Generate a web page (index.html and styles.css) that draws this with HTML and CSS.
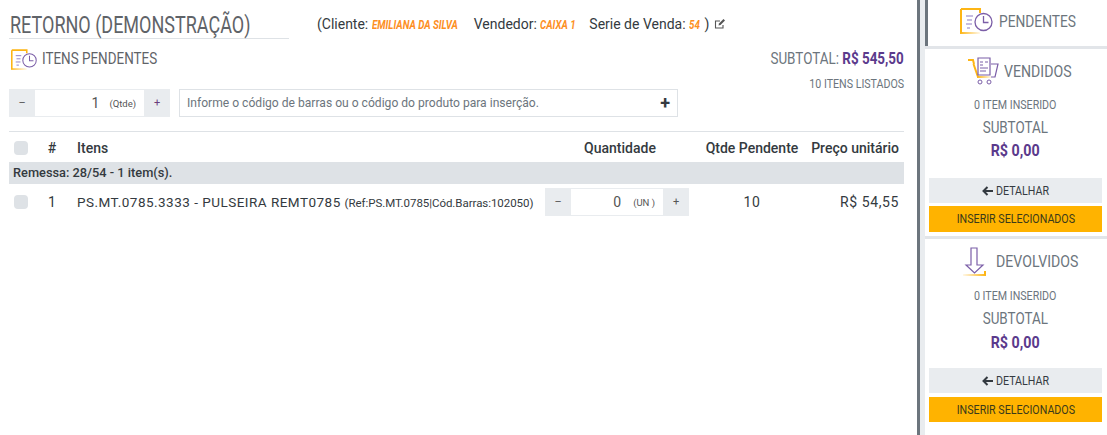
FILE: index.html
```html
<!DOCTYPE html>
<html lang="pt-BR">
<head>
<meta charset="utf-8">
<title>Retorno</title>
<link rel="stylesheet" href="styles.css">
</head>
<body>
<div class="app">
  <main class="main">
    <header class="top">
      <h1 class="title"><span class="cond">RETORNO (DEMONSTRAÇÃO)</span></h1>
      <p class="info">(Cliente: <em class="e1">EMILIANA DA SILVA</em><span class="sp"></span>Vendedor: <em class="e2">CAIXA 1</em><span class="sp"></span>Serie de Venda: <em class="e3">54</em> )
        <svg class="edit" width="12" height="12" viewBox="0 0 12 12"><path d="M9 7v3H1.500V3H6" fill="none" stroke="#555" stroke-width="1.100"/><path d="M4.500 7.500 5 5.500 9.500 1l1.500 1.500L6.500 7z" fill="#555"/></svg>
      </p>
    </header>
    <section class="summary">
      <div class="sec-title">
        <svg class="ico-pend" width="26" height="22" viewBox="0 0 33 27"><defs><linearGradient id="fade" x1="0" y1="0" x2="1" y2="0"><stop offset="0" stop-color="#fdb515"/><stop offset="1" stop-color="#fdb515" stop-opacity=".1"/></linearGradient></defs><path d="M1 1h19v4M1 1v24" fill="none" stroke="#fdb515" stroke-width="2"/><path d="M0 24h20v2H0z" fill="url(#fade)"/><path d="M6 8h7M7 12h5M6 16h6M7 20h3" stroke="#8e7cc3" stroke-width="1.200"/><circle cx="23.500" cy="14" r="8.500" fill="#fff" stroke="#7b5ea7" stroke-width="1.300"/><path d="M23.500 8v6.500h5" fill="none" stroke="#7b5ea7" stroke-width="1.300"/></svg>
        <span class="cond w-pend">ITENS PENDENTES</span>
      </div>
      <div class="totals">
        <div class="subtotal"><span class="cond right">SUBTOTAL: <b>R$ 545,50</b></span></div>
        <div class="listed"><span class="cond right">10 ITENS LISTADOS</span></div>
      </div>
    </section>
    <section class="inserts">
      <div class="stepper big">
        <span class="step">–</span>
        <span class="field"><span class="num">1</span><small>(Qtde)</small></span>
        <span class="step plus">+</span>
      </div>
      <div class="search">
        <span>Informe o código de barras ou o código do produto para inserção.</span>
        <b class="add">+</b>
      </div>
    </section>
    <section class="table">
      <div class="row head">
        <span class="check"></span>
        <span class="c-num">#</span>
        <span>Itens</span>
        <span class="c-center">Quantidade</span>
        <span class="c-center">Qtde Pendente</span>
        <span class="c-right">Preço unitário</span>
      </div>
      <div class="group">Remessa: 28/54 - 1 item(s).</div>
      <div class="row item">
        <span class="check"></span>
        <span class="c-num">1</span>
        <span class="name">PS.MT.0785.3333 - PULSEIRA REMT0785 <small>(Ref:PS.MT.0785|Cód.Barras:102050)</small></span>
        <div class="stepper">
          <span class="step">–</span>
          <span class="field"><span class="num">0</span><small>(UN )</small></span>
          <span class="step">+</span>
        </div>
        <span class="c-center wide">10</span>
        <span class="c-right wide">R$ 54,55</span>
      </div>
    </section>
  </main>
  <aside class="side">
    <div class="tab">
      <svg width="33" height="27" viewBox="0 0 33 27"><path d="M1 1h19v4M1 1v24" fill="none" stroke="#fdb515" stroke-width="2"/><path d="M0 24h20v2H0z" fill="url(#fade)"/><path d="M6 8h7M7 12h5M6 16h6M7 20h3" stroke="#8e7cc3" stroke-width="1.200"/><circle cx="23.500" cy="14" r="8.500" fill="#fff" stroke="#7b5ea7" stroke-width="1.300"/><path d="M23.500 8v6.500h5" fill="none" stroke="#7b5ea7" stroke-width="1.300"/></svg>
      <span class="cond w-tab">PENDENTES</span>
    </div>
    <div class="card">
      <div class="card-title vend">
        <svg width="33" height="28" viewBox="0 0 33 28"><path d="M1 3h5l1 4" fill="none" stroke="#fdb515" stroke-width="2"/><path d="M6.500 7 11 20" stroke="#fdb515" stroke-width="2"/><path d="M10 19h14v2H10z" fill="url(#fade)"/><path d="M11 1h12v17H11z" fill="#fff" stroke="#7b5ea7" stroke-width="1.200"/><path d="M13 5h3M18 5h3M13 8h3M13 11h8M13 14h6" stroke="#7b5ea7"/><path d="M24 7h7l-3 13h-4" fill="none" stroke="#7b5ea7" stroke-width="1.200"/><circle cx="13" cy="25" r="2" fill="none" stroke="#7b5ea7"/><circle cx="22" cy="25" r="2" fill="none" stroke="#7b5ea7"/></svg>
        <span class="cond w-vend">VENDIDOS</span>
      </div>
      <div class="count"><span class="cond center">0 ITEM INSERIDO</span></div>
      <div class="sub"><span class="cond center">SUBTOTAL</span></div>
      <div class="val"><span class="cond center">R$ 0,00</span></div>
      <div class="btn gray"><svg class="arrow" width="11" height="10" viewBox="0 0 11 10"><path d="M5.500 1 1.500 5l4 4M1.500 5H11" fill="none" stroke="#343a40" stroke-width="2"/></svg><span class="cond w-det">DETALHAR</span></div>
      <div class="btn amber"><span class="cond center">INSERIR SELECIONADOS</span></div>
    </div>
    <div class="card">
      <div class="card-title devo">
        <svg width="23" height="29" viewBox="0 0 23 29"><path d="M8 1v17H3l8.500 8 8.500-8h-6V1z" fill="none" stroke="#7b5ea7" stroke-width="1.200"/><path d="M0 27h23v2H0z" fill="url(#fade)" transform="rotate(180 11.500 28)"/><path d="M22 24v4" stroke="#fdb515" stroke-width="2"/></svg>
        <span class="cond w-devo">DEVOLVIDOS</span>
      </div>
      <div class="count"><span class="cond center">0 ITEM INSERIDO</span></div>
      <div class="sub"><span class="cond center">SUBTOTAL</span></div>
      <div class="val"><span class="cond center">R$ 0,00</span></div>
      <div class="btn gray"><svg class="arrow" width="11" height="10" viewBox="0 0 11 10"><path d="M5.500 1 1.500 5l4 4M1.500 5H11" fill="none" stroke="#343a40" stroke-width="2"/></svg><span class="cond w-det">DETALHAR</span></div>
      <div class="btn amber"><span class="cond center">INSERIR SELECIONADOS</span></div>
    </div>
  </aside>
</div>
</body>
</html>
```
FILE: styles.css
```css
* { box-sizing: border-box; }
html, body { margin: 0; height: 100%; overflow: hidden; background: #fff; }
body { font-family: "Roboto", "Liberation Sans", sans-serif; color: #343a40; font-size: 13px; }
.app { display: flex; height: 435px; }
.main { width: 917px; padding: 0 13px 0 9px; flex: none; }
.side { width: 190px; flex: none; border-left: 3px solid #6c757d; padding-left: 5px; background: linear-gradient(#e9ecef, #e9ecef) left/5px 100% no-repeat; }

.cond { display: inline-block; white-space: nowrap; transform: scaleX(.79); transform-origin: left center; }
.cond.right { transform-origin: right center; }
.cond.center { transform-origin: center; }

.top { display: flex; height: 39px; align-items: flex-start; }
.title { margin: 0; width: 280px; height: 39px; border-bottom: 1px solid #dee2e6; font-weight: 400; font-size: 24px; line-height: 51px; color: #5f6368; padding-left: 1px; white-space: nowrap; }
.title .cond { transform: scaleX(.75); }
.info { margin: 15px 0 0 28px; font-size: 14px; line-height: 18px; white-space: nowrap; }
.info em { display: inline-block; white-space: nowrap; font-size: 12.500px; font-weight: 700; color: #fd8f1f; transform: scaleX(.78); transform-origin: left center; }
.e1 { width: 86px; }
.e2 { width: 33px; }
.e3 { width: 12px; }
.sp { display: inline-block; width: 16px; }
.edit { vertical-align: -1px; margin-left: 1px; }

.summary { display: flex; justify-content: space-between; height: 50px; padding-top: 10px; }
.sec-title { display: flex; gap: 5px; align-items: flex-start; height: 22px; padding-left: 2px; font-size: 17px; line-height: 18px; color: #5f6368; }
.w-pend { width: 115px; }
.totals { text-align: right; }
.subtotal { font-size: 17px; color: #6c757d; line-height: 18px; }
.subtotal b { color: #5b3a8c; }
.listed { font-size: 13.500px; color: #6c757d; line-height: 18px; margin-top: 7px; }

.inserts { display: flex; gap: 9px; height: 43px; border-bottom: 1px solid #dee2e6; }
.stepper { display: flex; height: 28px; background: #e9ecef; width: 144px; font-size: 13px; }
.stepper.big { width: 161px; }
.step { width: 26px; flex: none; text-align: center; line-height: 28px; font-size: 11px; color: #555; }
.step.plus { color: #6a3d7c; }
.field { flex: 1; background: #fff; margin: 1px 0; display: flex; justify-content: flex-end; align-items: center; gap: 10px; padding-right: 8px; font-size: 14px; color: #555; }
.stepper:not(.big) .field { gap: 12px; }
.field small { font-size: 9.500px; }
.search { width: 499px; height: 28px; border: 1px solid #dee2e6; padding: 0 7px; display: flex; justify-content: space-between; align-items: center; color: #6c757d; font-size: 12.100px; }
.add { font-size: 18px; color: #343a40; line-height: 1; }

.table { font-size: 14px; }
.row { display: grid; grid-template-columns: 29px 28px 479px 144px 126px 89px; align-items: center; }
.row > *:nth-child(3) { padding-left: 11px; }
.row > .stepper { padding-left: 0; }
.head { height: 30px; padding-top: 2px; font-weight: 500; color: #343a40; }
.item { height: 36px; }
.check { width: 14px; height: 14px; margin-left: 5px; border-radius: 4px; background: #dee2e6; }
.c-num { text-align: center; }
.c-center { text-align: center; }
.c-right { text-align: right; padding-right: 5px; margin-left: -10px; white-space: nowrap; }
.wide { letter-spacing: .6px; }
.group { height: 22px; background: #dee2e6; line-height: 22px; padding-left: 4px; font-size: 12.800px; font-weight: 500; color: #343a40; }
.name { white-space: nowrap; font-size: 13.500px; letter-spacing: .48px; }
.name small { font-size: 11.500px; letter-spacing: -.05px; }
.head .c-center:nth-child(4) { padding-left: 6px; }

.tab { height: 46px; padding-bottom: 4px; border-left: 3px solid #6c757d; display: flex; align-items: center; justify-content: center; gap: 6px; font-size: 17px; color: #6c757d; }
.w-tab { width: 77px; transform: scaleX(.81); }
.card { height: 190px; border-top: 3px solid #e2e5e9; padding: 0 5px 0 4px; text-align: center; color: #6c757d; }
.card-title { height: 44px; display: flex; align-items: center; justify-content: center; gap: 4px; font-size: 17px; color: #6c757d; }
.vend { padding-left: 4px; }
.devo { gap: 10px; padding-left: 6px; }
.w-vend { width: 64px; transform: scaleX(.83); }
.w-devo { width: 79px; transform: scaleX(.83); }
.count { font-size: 13.500px; margin-top: 2px; line-height: 18px; }
.sub { font-size: 17px; line-height: 22px; margin-top: 3px; }
.val { font-size: 17px; font-weight: 700; color: #5b3a8c; line-height: 24px; height: 40px; }
.val .cond { transform: scaleX(.84); }
.btn { height: 25px; line-height: 25px; font-size: 13.500px; color: #343a40; }
.arrow { margin-right: 3px; }
.w-det { width: 53px; }
.gray { background: #e9ecef; margin-bottom: 3px; display: flex; align-items: center; justify-content: center; }
.amber { background: #ffb300; color: #3a3a1a; height: 26px; }
.card:last-child .count { margin-top: 3px; }
.card:last-child .val { margin-top: 1px; height: 38px; }
.card:last-child .gray { margin-bottom: 4px; }
.card:last-child .amber { height: 25px; }
```
